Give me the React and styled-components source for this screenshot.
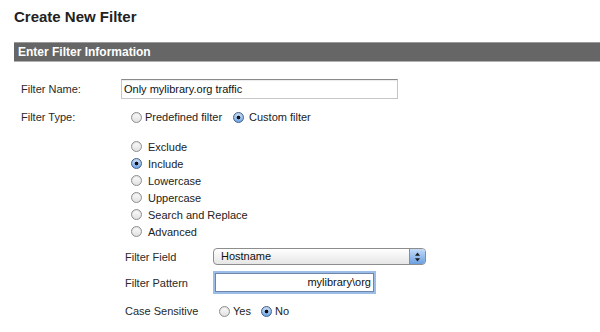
import React from "react";
import styled, { createGlobalStyle } from "styled-components";

const GlobalStyle = createGlobalStyle`
	body {
		margin: 0;
		background: #fff;
		font-family: "Liberation Sans", Arial, sans-serif;
		color: #222;
	}
`;

const Page = styled.div`
	padding: 8px 0 0 14px;
`;

const Title = styled.h1`
	margin: 0;
	font-size: 15px;
	line-height: 18px;
	font-weight: bold;
	color: #222;
`;

const SectionBar = styled.div`
	margin-top: 16px;
	height: 18px;
	line-height: 18px;
	padding-left: 4px;
	background: #666;
	border-top: 1px solid #9a9a9a;
	border-bottom: 1px solid #b0b0b0;
	color: #fff;
	font-size: 12px;
	font-weight: bold;
`;

const Form = styled.div`
	padding: 17px 0 0 7px;
	font-size: 11px;
`;

const Row = styled.div`
	display: flex;
	align-items: center;
	height: ${(p) => p.$h}px;
	margin-top: ${(p) => p.$mt || 0}px;
	padding-left: ${(p) => p.$indent || 0}px;
`;

const Label = styled.div`
	width: ${(p) => p.$w}px;
	flex: none;
	color: #2a2a2a;
`;

const TextField = styled.div`
	box-sizing: border-box;
	width: 277px;
	height: 20px;
	line-height: 18px;
	padding-left: 2px;
	border: 1px solid #c6c6c6;
	border-top-color: #8a8a8a;
	box-shadow: inset 0 1px 1px rgba(0, 0, 0, 0.08);
	color: #111;
`;

const Choices = styled.div`
	display: flex;
	align-items: center;
	padding-left: ${(p) => p.$pad}px;
`;

const Choice = styled.span`
	display: inline-flex;
	align-items: center;
	gap: ${(p) => p.$gap}px;
	margin-right: ${(p) => p.$space || 0}px;
	color: #222;
`;

const RadioDot = styled.span`
	flex: none;
	box-sizing: border-box;
	width: 11px;
	height: 11px;
	border-radius: 50%;
	border: 1px solid ${(p) => (p.$on ? "#3f5f8c" : "#8e8e8e")};
	background: ${(p) =>
		p.$on
			? "radial-gradient(circle, #111 0 1.5px, transparent 2.2px), linear-gradient(#d3e6fc, #6ea5e5)"
			: "linear-gradient(#fdfdfd, #e0e0e0)"};
	box-shadow: inset 0 1px 1px rgba(0, 0, 0, 0.12);
`;

const OptionList = styled.div`
	margin-top: 13px;
	padding-left: 110px;
`;

const Option = styled.div`
	display: flex;
	align-items: center;
	gap: 6px;
	height: 17px;
	color: #222;
`;

const SubForm = styled.div`
	padding-left: 104px;
`;

const Select = styled.div`
	box-sizing: border-box;
	display: flex;
	align-items: stretch;
	justify-content: space-between;
	width: 213px;
	height: 17px;
	border: 1px solid #8d8d8d;
	border-radius: 4px;
	background: linear-gradient(#ffffff, #e6e6e6);
	overflow: hidden;
	color: #111;
`;

const SelectText = styled.span`
	padding-left: 7px;
	line-height: 15px;
`;

const Stepper = styled.span`
	width: 15px;
	display: flex;
	align-items: center;
	justify-content: center;
	background: linear-gradient(#c4dcf8, #6b9fe0);
	border-left: 1px solid #7d90aa;
`;

const PatternField = styled.div`
	box-sizing: border-box;
	width: 159px;
	height: 19px;
	margin-left: 2px;
	line-height: 17px;
	padding-right: 2px;
	text-align: right;
	border: 1px solid #6f86ab;
	box-shadow: 0 0 0 2px #9bbde8;
	color: #111;
`;

const Radio = ({ on, children, gap, space }) => (
	<Choice $gap={gap} $space={space}>
		<RadioDot $on={on} />
		{children}
	</Choice>
);

const options = ["Exclude", "Include", "Lowercase", "Uppercase", "Search and Replace", "Advanced"];

const App = () => {
	return (
		<Page>
			<GlobalStyle />
			<Title>Create New Filter</Title>
			<SectionBar>Enter Filter Information</SectionBar>
			<Form>
				<Row $h={20}>
					<Label $w={100}>Filter Name:</Label>
					<TextField>Only mylibrary.org traffic</TextField>
				</Row>
				<Row $h={16} $mt={10}>
					<Label $w={100}>Filter Type:</Label>
					<Choices $pad={10}>
						<Radio gap={3} space={11}>Predefined filter</Radio>
						<Radio on gap={5}>Custom filter</Radio>
					</Choices>
				</Row>
				<OptionList>
					{options.map((o) => (
						<Option key={o}>
							<RadioDot $on={o === "Include"} />
							{o}
						</Option>
					))}
				</OptionList>
				<SubForm>
					<Row $h={17} $mt={8}>
						<Label $w={88}>Filter Field</Label>
						<Select>
							<SelectText>Hostname</SelectText>
							<Stepper>
								<svg width="7" height="10" viewBox="0 0 7 10">
									<path d="M3.5 0.5 L6 3.8 H1 Z" fill="#1a1a1a" />
									<path d="M3.5 9.5 L6 6.2 H1 Z" fill="#1a1a1a" />
								</svg>
							</Stepper>
						</Select>
					</Row>
					<Row $h={23} $mt={6}>
						<Label $w={88}>Filter Pattern</Label>
						<PatternField>mylibrary\org</PatternField>
					</Row>
					<Row $h={16} $mt={9}>
						<Label $w={88}>Case Sensitive</Label>
						<Choices $pad={6}>
							<Radio gap={3} space={10}>Yes</Radio>
							<Radio on gap={3}>No</Radio>
						</Choices>
					</Row>
				</SubForm>
			</Form>
		</Page>
	);
};

export default App;
